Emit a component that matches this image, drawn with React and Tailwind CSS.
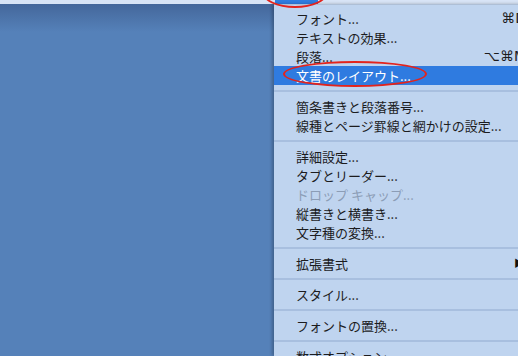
import React from 'react';

const items = [
  { label: 'フォント...', key: '⌘D' },
  { label: 'テキストの効果...' },
  { label: '段落...', key: '⌥⌘M' },
  { label: '文書のレイアウト...', active: true },
  { sep: true },
  { label: '箇条書きと段落番号...' },
  { label: '線種とページ罫線と網かけの設定...' },
  { sep: true },
  { label: '詳細設定...' },
  { label: 'タブとリーダー...' },
  { label: 'ドロップ キャップ...', disabled: true },
  { label: '縦書きと横書き...' },
  { label: '文字種の変換...' },
  { sep: true },
  { label: '拡張書式', submenu: true },
  { sep: true },
  { label: 'スタイル...' },
  { sep: true },
  { label: 'フォントの置換...' },
  { sep: true },
  { label: '数式オプション...' },
];

function MenuRow({ item }) {
  if (item.sep) {
    return (
      <div className="h-[12px] flex items-center">
        <div className="h-[2px] w-full bg-[#a8bfdf]" />
      </div>
    );
  }
  const color = item.active
    ? 'bg-[#2f7be0] text-white'
    : item.disabled
    ? 'text-[#8c9db6]'
    : 'text-[#1c1c1e]';
  return (
    <div className={`h-[19px] flex items-center pl-[22px] pr-[14px] text-[13px] leading-none ${color}`}>
      <span className="flex-1 whitespace-nowrap">{item.label}</span>
      {item.key && (
        <span className="whitespace-nowrap font-['DejaVu_Sans','Noto_Sans_CJK_JP',sans-serif] text-[14px]">{item.key}</span>
      )}
      {item.submenu && <span className="text-[10px] mr-[2px] text-[#111]">▶</span>}
    </div>
  );
}

export default function App() {
  return (
    <div className="relative w-[518px] h-[356px] overflow-hidden bg-[#5581b9] font-['Noto_Sans_CJK_JP','Noto_Sans',sans-serif]">
      <div className="h-[4px] bg-[#d8e4f6] flex">
        <div className="ml-[275px] w-[43px] h-full bg-[#2f7ce0]" />
      </div>
      <div className="flex h-[352px]">
        <div className="w-[274px] shrink-0 bg-[linear-gradient(to_bottom,#44679b_0px,#5581b9_28px)]" />
        <div className="w-[266px] shrink-0 bg-[#bfd4ef] pt-[3.5px] border-t border-[#aebfd6] shadow-[-2px_0_3px_rgba(0,0,0,0.25)]">
          {items.map((item, i) => (
            <MenuRow key={i} item={item} />
          ))}
        </div>
      </div>

      <div className="absolute left-[262px] top-[-24px] w-[66px] h-[32px] rounded-[50%] border-2 border-[#e3231c]" />
      <div className="absolute left-[283px] top-[61px] w-[144px] h-[26px] rounded-[50%] border-2 border-[#e3231c]" />
    </div>
  );
}
